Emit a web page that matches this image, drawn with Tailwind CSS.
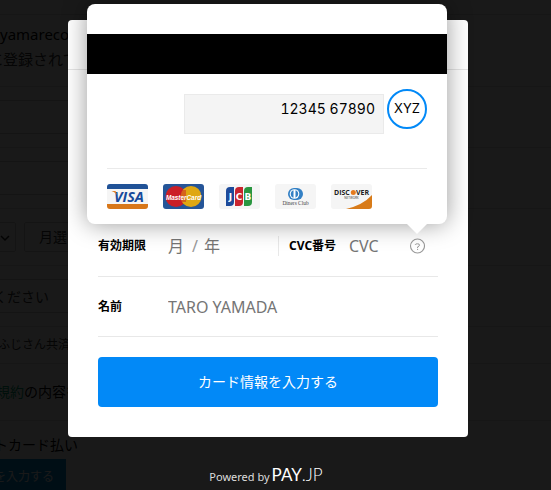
<!DOCTYPE html>
<html lang="ja">
<head>
<meta charset="utf-8">
<meta name="viewport" content="width=device-width, initial-scale=1">
<title>PAY.JP</title>
<script src="https://cdn.jsdelivr.net/npm/@tailwindcss/browser@4"></script>
</head>
<body class="relative h-screen overflow-hidden bg-white font-['Noto_Sans','Noto_Sans_CJK_JP',sans-serif] text-black">

<!-- Page behind the dialog -->
<div class="-ml-3 whitespace-nowrap text-sm text-[#333]" inert>
  <div class="h-[15px] border-b border-[#ddd]"></div>
  <div class="border-b border-[#ddd] pt-[7px] pb-3.5 text-[15px] leading-[25px]">
    <p class="pl-3 text-black">yamareco.</p>
    <p>に登録されて</p>
  </div>
  <div class="border-b border-[#ddd] py-[13px]"><input aria-label="姓" class="block h-[34px] w-1/2 border border-[#ccc]"></div>
  <div class="border-b border-[#ddd] py-[13px]"><input aria-label="名" class="block h-[34px] w-1/2 border border-[#ccc]"></div>
  <div class="flex gap-2 border-b border-[#ddd] py-[13px]">
    <div class="relative">
      <select aria-label="年" class="block h-[30px] w-7 appearance-none rounded-xs border border-[#ccc]"><option></option></select>
      <svg class="absolute top-3 right-1.5 h-2 w-2.5" viewBox="0 0 10 8" fill="none" stroke="#222" stroke-width="1.5"><path d="M1 2l4 4 4-4"/></svg>
    </div>
    <select aria-label="月" class="block h-[30px] w-24 appearance-none rounded-xs border border-[#ccc] px-3.5"><option>月選</option></select>
  </div>
  <div class="border-b border-[#ddd] py-[13px]"><input aria-label="住所" value="ください" class="block h-[34px] w-1/2 border border-[#ccc] px-1"></div>
  <div class="border-b border-[#ddd] px-2.5 py-1.5 text-xs leading-6">ふじさん共済</div>
  <div class="border-b border-[#ddd] px-2 py-4 leading-6 text-black"><a href="#" class="text-[#00a070]">規約</a>の内容を</div>
  <div class="px-1.5 pt-3">
    <p class="leading-6 text-black">トカード払い</p>
    <button type="button" class="mt-0.5 -ml-1.5 block h-9 bg-[#0090d8] pr-3 pl-1.5 text-xs text-white">を入力する</button>
  </div>
</div>

<!-- Dialog -->
<div class="absolute inset-0 flex flex-col items-center bg-black/90 pt-5 pr-[15px]">
  <main role="dialog" aria-label="カード情報" class="relative w-full max-w-[400px] rounded bg-white">
    <header class="h-[50px] border-b border-[#e5e5e5]"></header>
    <form class="px-[30px] pt-[147px] pb-[30px]">
      <div class="flex h-[60px] items-center border-b border-[#e8e8e8] pb-0.5">
        <label for="month" class="w-[70px] text-xs font-bold">有効期限</label>
        <input id="month" placeholder="月" class="w-6 text-base outline-none placeholder:text-[#757575]">
        <span class="text-base text-[#999]">/</span>
        <input id="year" aria-label="年" placeholder="年" class="ml-1.5 w-6 text-base outline-none placeholder:text-[#757575]">
        <div class="ml-auto flex h-5 w-40 items-center border-l border-[#e8e8e8] pl-2.5">
          <label for="cvc" class="w-[60px] shrink-0 text-xs font-bold">CVC番号</label>
          <input id="cvc" placeholder="CVC" class="w-[60px] text-base outline-none placeholder:text-[#757575]">
          <button type="button" aria-label="CVC番号について" class="h-4 w-4">
            <svg viewBox="0 0 16 16" class="h-4 w-4" fill="none" stroke="#999"><circle cx="8.500" cy="8" r="7" stroke-width="1.1"/><path d="M6.300 7V6.700Q6.300 5.800 8.500 5.800T10.500 7.200Q10.500 8.200 8.600 8.900V10M8.600 10.800v1.200"/></svg>
          </button>
        </div>
      </div>
      <div class="flex h-[60px] items-center border-b border-[#e8e8e8]">
        <label for="name" class="w-[70px] text-xs font-bold">名前</label>
        <input id="name" placeholder="TARO YAMADA" class="min-w-0 flex-1 text-base outline-none placeholder:text-[#757575]">
      </div>
      <button type="submit" class="mt-5 block h-[50px] w-full rounded bg-[#0289f7] text-sm text-white">カード情報を入力する</button>
    </form>

    <!-- CVC help popover -->
    <div role="tooltip" class="absolute inset-x-5 -top-4 mr-px -ml-px h-[220px] rounded-lg bg-white shadow-[0_0_24px_rgba(0,0,0,0.4)]">
      <div class="mt-[30px] h-10 bg-black"></div>
      <div class="flex items-start justify-end gap-[3px] px-5 pt-[15px] font-['Inter',sans-serif] text-black">
        <div class="mt-[5px] h-10 w-[200px] border border-[#eaeaea] bg-[#f4f4f4] pt-1 pr-2 text-right text-sm tabular-nums">12345 67890</div>
        <div class="flex h-10 w-10 items-center justify-center rounded-full border-2 border-[#0289f7] text-[13px]">XYZ</div>
      </div>
      <div class="mx-5 mt-[34px] flex gap-[15px] border-t border-[#eaeaea] pt-[15px]">
        <svg class="h-[25px] w-[41px] rounded-[3px] bg-[#f5f5f5]" viewBox="0 0 41 25" role="img" aria-label="VISA">
          <path fill="#205297" d="M0 0h41v5H0z"/><path fill="#d87719" d="M0 20h41v5H0z"/>
          <text x="22" y="17.500" text-anchor="middle" font-family="Open Sans" font-weight="700" font-style="italic" font-size="14.500" fill="#174a9b">VISA</text><path fill="#e17e21" d="M4.500 7h4l2 5q-1-3-6-5z"/>
        </svg>
        <svg class="h-[25px] w-[41px] rounded-[3px] bg-[#255598]" viewBox="0 0 41 25" role="img" aria-label="MasterCard">
          <circle cx="13" cy="12.500" r="10.500" fill="#cb1f27"/><circle cx="28" cy="12.500" r="10.500" fill="#dfa712"/>
          <path d="M18 7h5M17 9h6M17 11h6M17 13h6M17 15h6M18 17h5" stroke="#cb1f27"/>
          <text x="20.500" y="15.500" text-anchor="middle" font-family="Liberation Sans" font-weight="700" font-style="italic" font-size="6.400" fill="#fff">MasterCard</text>
        </svg>
        <svg class="h-[25px] w-[41px] rounded-[3px] bg-[#f5f5f5]" viewBox="0 0 41 25" role="img" aria-label="JCB">
          <path fill="#1d4b9b" d="M7 7q0-4 4-4h4v15q0 4-4 4H7z"/><path fill="#c9252f" d="M16 7q0-4 4-4h4v15q0 4-4 4h-4z"/><path fill="#2a9640" d="M25 7q0-4 4-4h4v15q0 4-4 4h-4z"/>
          <g font-family="DejaVu Sans" font-weight="700" font-size="9" fill="#fff" text-anchor="middle"><text x="11.500" y="16">J</text><text x="20" y="16">C</text><text x="29" y="16">B</text></g>
        </svg>
        <svg class="h-[25px] w-[41px] rounded-[3px] bg-[#f5f5f5]" viewBox="0 0 41 25" role="img" aria-label="Diners Club">
          <path fill="#3380c5" d="M19 4h3a6 6 0 010 12h-3z"/><circle cx="19" cy="10" r="6" fill="#3380c5"/><circle cx="19.500" cy="10" r="4.800" fill="#fff"/><path fill="#3380c5" d="M18.500 6.200a4 4 0 000 7.600zM20.500 6.200a4 4 0 010 7.600z"/>
          <text x="20.500" y="20.800" text-anchor="middle" font-family="Liberation Serif" font-size="5.400" fill="#444">Diners Club</text>
        </svg>
        <svg class="h-[25px] w-[41px] rounded-[3px] bg-[#f5f5f5]" viewBox="0 0 41 25" role="img" aria-label="DISCOVER NETWORK">
          <path fill="#d87b19" d="M41 11v14H15Q32 21 41 11z"/><circle cx="22.300" cy="8.500" r="2.500" fill="#e57a1f"/>
          <g font-family="Open Sans" font-weight="700" font-size="7" fill="#222"><text x="3" y="11">DISC</text><text x="25" y="11">VER</text></g>
          <text x="20.500" y="15" text-anchor="middle" font-family="Open Sans" font-size="3" fill="#333">NETWORK</text>
        </svg>
      </div>
      <svg class="absolute top-full right-5 h-2.5 w-5" viewBox="0 0 20 10"><path fill="#fff" d="M0 0h20L10 10z"/></svg>
    </div>
  </main>
  <footer class="mt-[26px] flex items-baseline gap-0.5 pr-1 leading-6 text-white">
    <span class="text-[11px] text-[#ddd]">Powered by</span>
    <span class="font-['Lato',sans-serif] text-[17px]">PAY<span class="font-light">.JP</span></span>
  </footer>
</div>
</body>
</html>
